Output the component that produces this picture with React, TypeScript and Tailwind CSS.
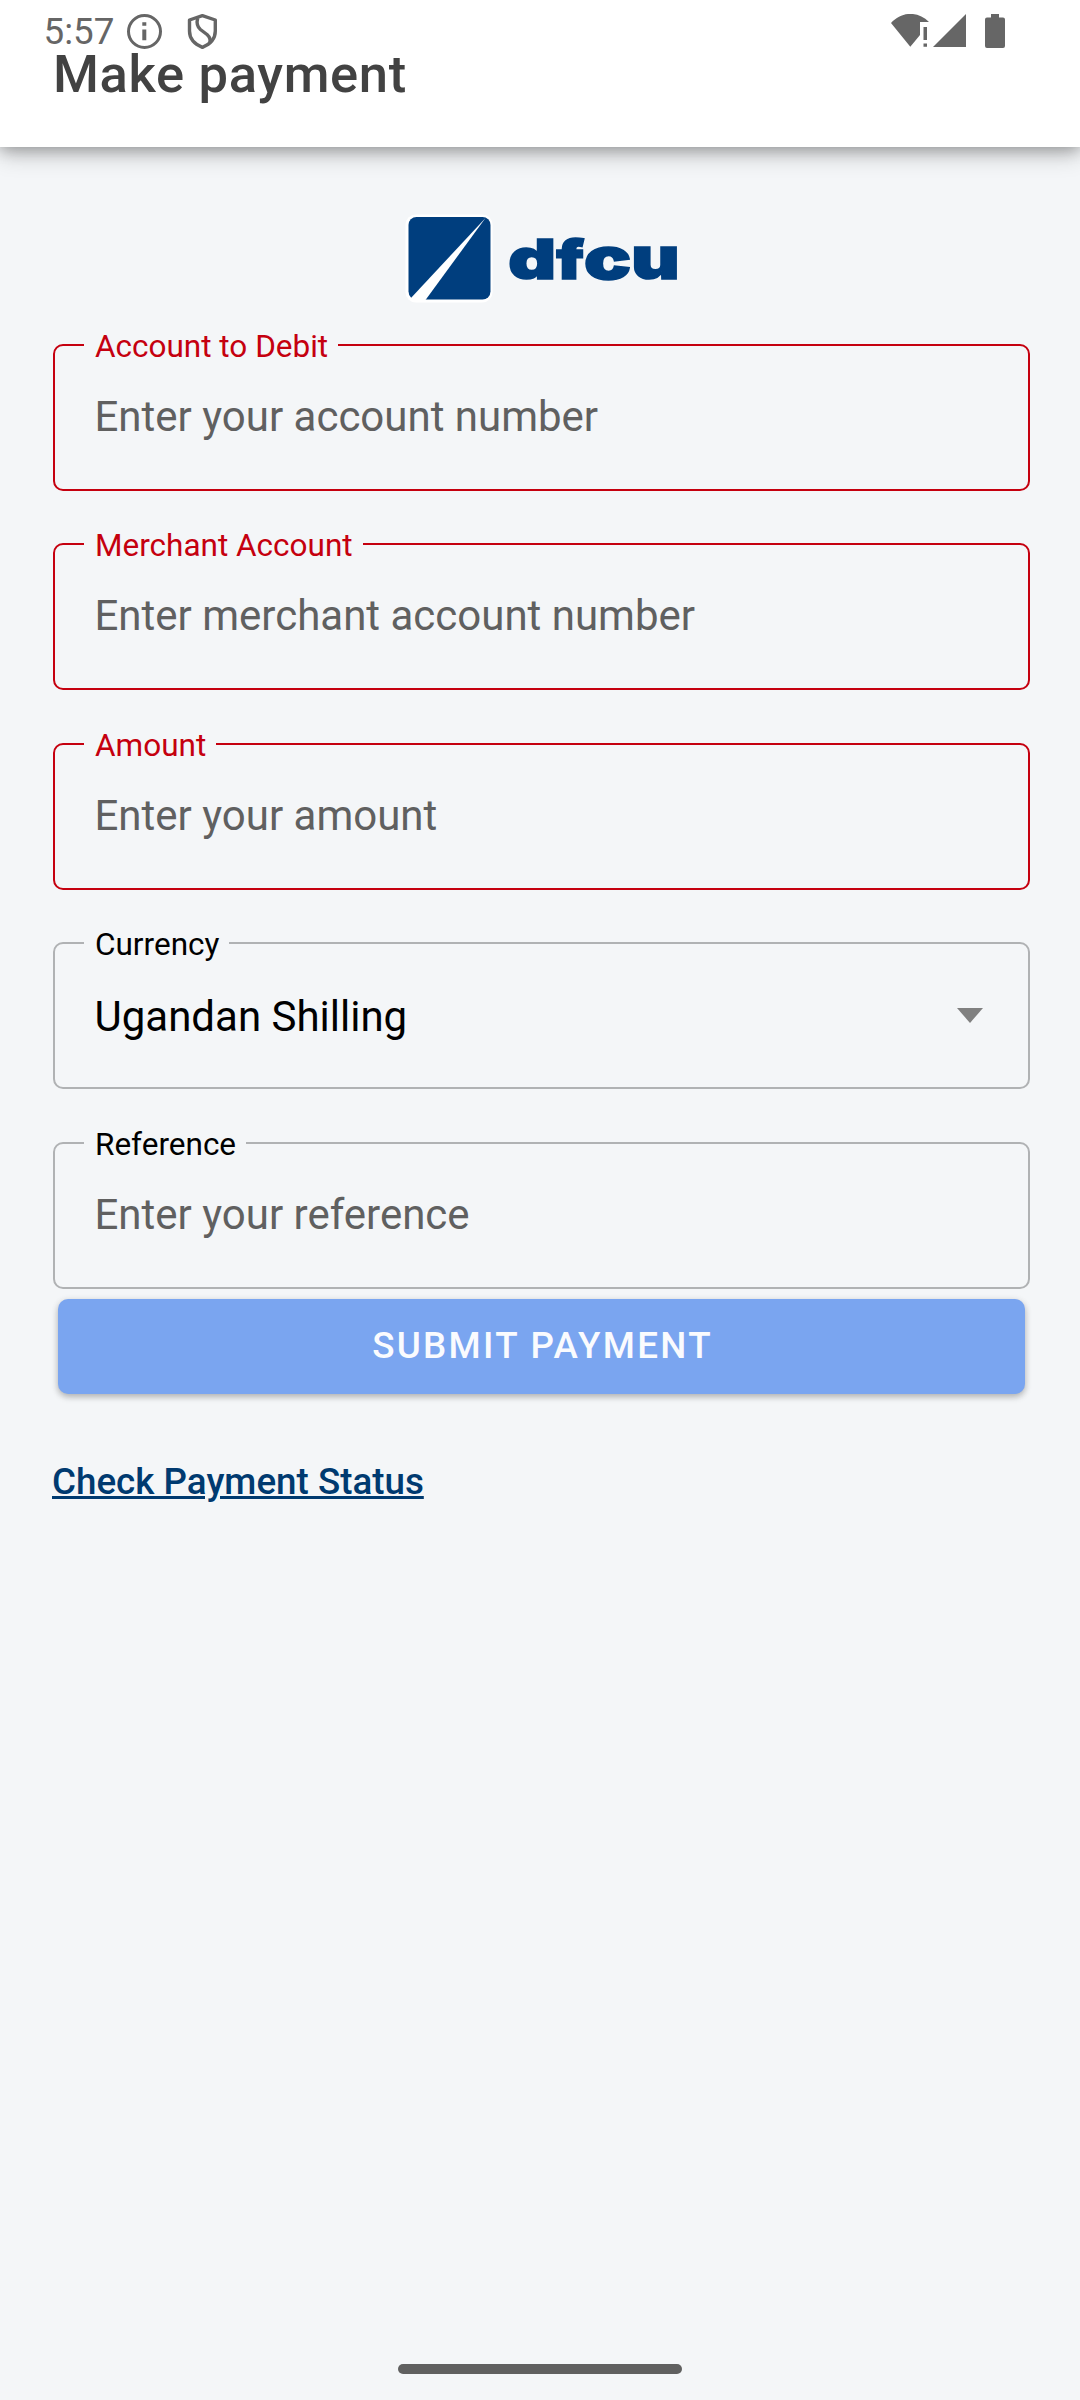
import React from "react";

function StatusBar() {
  return (
    <div className="absolute inset-x-0 top-0 flex h-16 items-start text-[#666666]">
      <span className="ml-[43.5px] mt-[10px] w-[83.5px] whitespace-nowrap text-[36.75px] leading-[44px]">5:57</span>
      <svg className="mt-[14px] h-[35px] w-[35px]" viewBox="0 0 35 35" fill="none">
        <circle cx="17.5" cy="17.5" r="16" stroke="currentColor" strokeWidth="3" />
        <path d="M15.3 8.2h4v3.6h-4zM15.3 15.5h4v10.8h-4z" fill="currentColor" />
      </svg>
      <svg className="ml-[25px] mt-[14px] h-[35px] w-[30px]" viewBox="0 0 30 35" fill="none" stroke="currentColor" strokeWidth="3.4" strokeLinejoin="round">
        <path d="M15.400 1.700 28.300 6v11c0 7.500-5.500 13.300-12.900 16.300C8 30.300 2.500 24.500 2.500 17V6z" />
        <path d="M10.700 4C9.400 9 9.900 12.500 13.400 15.500L20 20.500C23.200 23.500 23.700 26 22.700 28.500" />
      </svg>
      <svg className="ml-auto mt-[14px] h-[34px] w-[38px]" viewBox="0 0 38 34" fill="currentColor">
        <path d="M0 9C11-3 27-3 38 8H29V21L19.300 32.700z" />
        <path d="M32.500 13h3.500v13h-3.500zM32.500 29.500h3.500v3.200h-3.500z" />
      </svg>
      <svg className="ml-[4px] mt-[14px] h-[33px] w-[33px]" viewBox="0 0 33 33" fill="currentColor">
        <path d="M33 0V33H0z" />
      </svg>
      <svg className="ml-[19px] mr-[75px] mt-[14px] h-[34px] w-[20px]" viewBox="0 0 20 34" fill="currentColor">
        <path d="M6 0h8v3.500h4a2 2 0 0 1 2 2V32a2 2 0 0 1-2 2H2a2 2 0 0 1-2-2V5.500a2 2 0 0 1 2-2h4z" />
      </svg>
    </div>
  );
}

function Logo() {
  return (
    <svg className="mx-auto block h-[90px] w-[274px]" viewBox="0 0 274 90">
      <rect x="0.500" y="0.500" width="87" height="88" rx="10" fill="#fff" />
      <rect x="3.500" y="3" width="82" height="82.500" rx="8" fill="#003e7e" />
      <path d="M80.500 4 5.500 84.500 11 88 20.500 86z" fill="#fff" />
      <g fill="#003e7e" stroke="#003e7e" strokeWidth="1.500" className="font-['Inter'] text-[54px] font-black">
        <text transform="translate(103.300 64.700) scale(1.37 1.03)">d</text>
        <text transform="translate(151.300 64.700) scale(1.22 1)">f</text>
        <text transform="translate(179 64.700) scale(1.45 1.08)">c</text>
        <text transform="translate(226.300 64.700) scale(1.38 1.08)">u</text>
      </g>
    </svg>
  );
}

type FieldProps = {
  label: string;
  text: string;
  error?: boolean;
  select?: boolean;
};

function Field({ label, text, error, select }: FieldProps) {
  return (
    <div
      className={`relative flex h-[147px] w-[977px] items-center rounded-[10px] border-2 pl-[39.5px] pr-[45px] ${
        error ? "border-[#c5000f]" : "border-[#b0b2b4]"
      }`}
    >
      <span
        className={`absolute left-[29px] top-[-19px] whitespace-nowrap bg-[#f4f6f8] pl-[11px] pr-[10px] text-[31.5px] leading-[40px] ${
          error ? "text-[#c5000f]" : "text-black"
        }`}
      >
        {label}
      </span>
      <span className={`text-[42px] leading-[50px] ${select ? "mt-[2px] text-black" : "mt-[-1px] text-[#606060]"}`}>{text}</span>
      {select && (
        <svg className="ml-auto h-[15px] w-[26px]" viewBox="0 0 26 15">
          <path d="M0 0h26L13 15z" fill="#808080" />
        </svg>
      )}
    </div>
  );
}

export default function App() {
  return (
    <div className="relative flex h-[2400px] w-[1080px] flex-col overflow-hidden bg-[#f4f6f8] font-['Roboto',sans-serif]">
      <header className="h-[147px] shrink-0 bg-white pl-[53px] pt-[43px] shadow-[0_8px_22px_rgba(0,0,0,0.2),0_2px_14px_rgba(0,0,0,0.28)]">
        <h1 className="text-[52.5px] font-medium leading-[62px] tracking-[0.0125em] text-[#424242]">Make payment</h1>
      </header>
      <StatusBar />
      <main className="flex flex-col pl-[53px] pt-[67px]">
        <div className="w-[977px]">
          <Logo />
        </div>
        <div className="mt-[40px] flex flex-col">
          <Field label="Account to Debit" text="Enter your account number" error />
          <div className="mt-[52px]">
            <Field label="Merchant Account" text="Enter merchant account number" error />
          </div>
          <div className="mt-[53px]">
            <Field label="Amount" text="Enter your amount" error />
          </div>
          <div className="mt-[52px]">
            <Field label="Currency" text="Ugandan Shilling" select />
          </div>
          <div className="mt-[53px]">
            <Field label="Reference" text="Enter your reference" />
          </div>
        </div>
        <button className="ml-[5px] mt-[10px] h-[95px] w-[967px] rounded-[10px] bg-[#7aa5f0] pb-[2px] pl-[2px] text-[36.75px] font-medium leading-[44px] tracking-[0.0625em] text-[#fafbfe] shadow-[0_3px_6px_rgba(0,0,0,0.25),0_1px_8px_rgba(0,0,0,0.06)]">
          SUBMIT PAYMENT
        </button>
        <a className="-ml-px mt-[66px] self-start text-[36.75px] font-medium leading-[44px] text-[#003a70] underline decoration-[3px]">
          Check Payment Status
        </a>
      </main>
      <div className="mb-[26px] mt-auto h-[10px] w-[284px] self-center rounded-full bg-[#606060]" />
    </div>
  );
}
